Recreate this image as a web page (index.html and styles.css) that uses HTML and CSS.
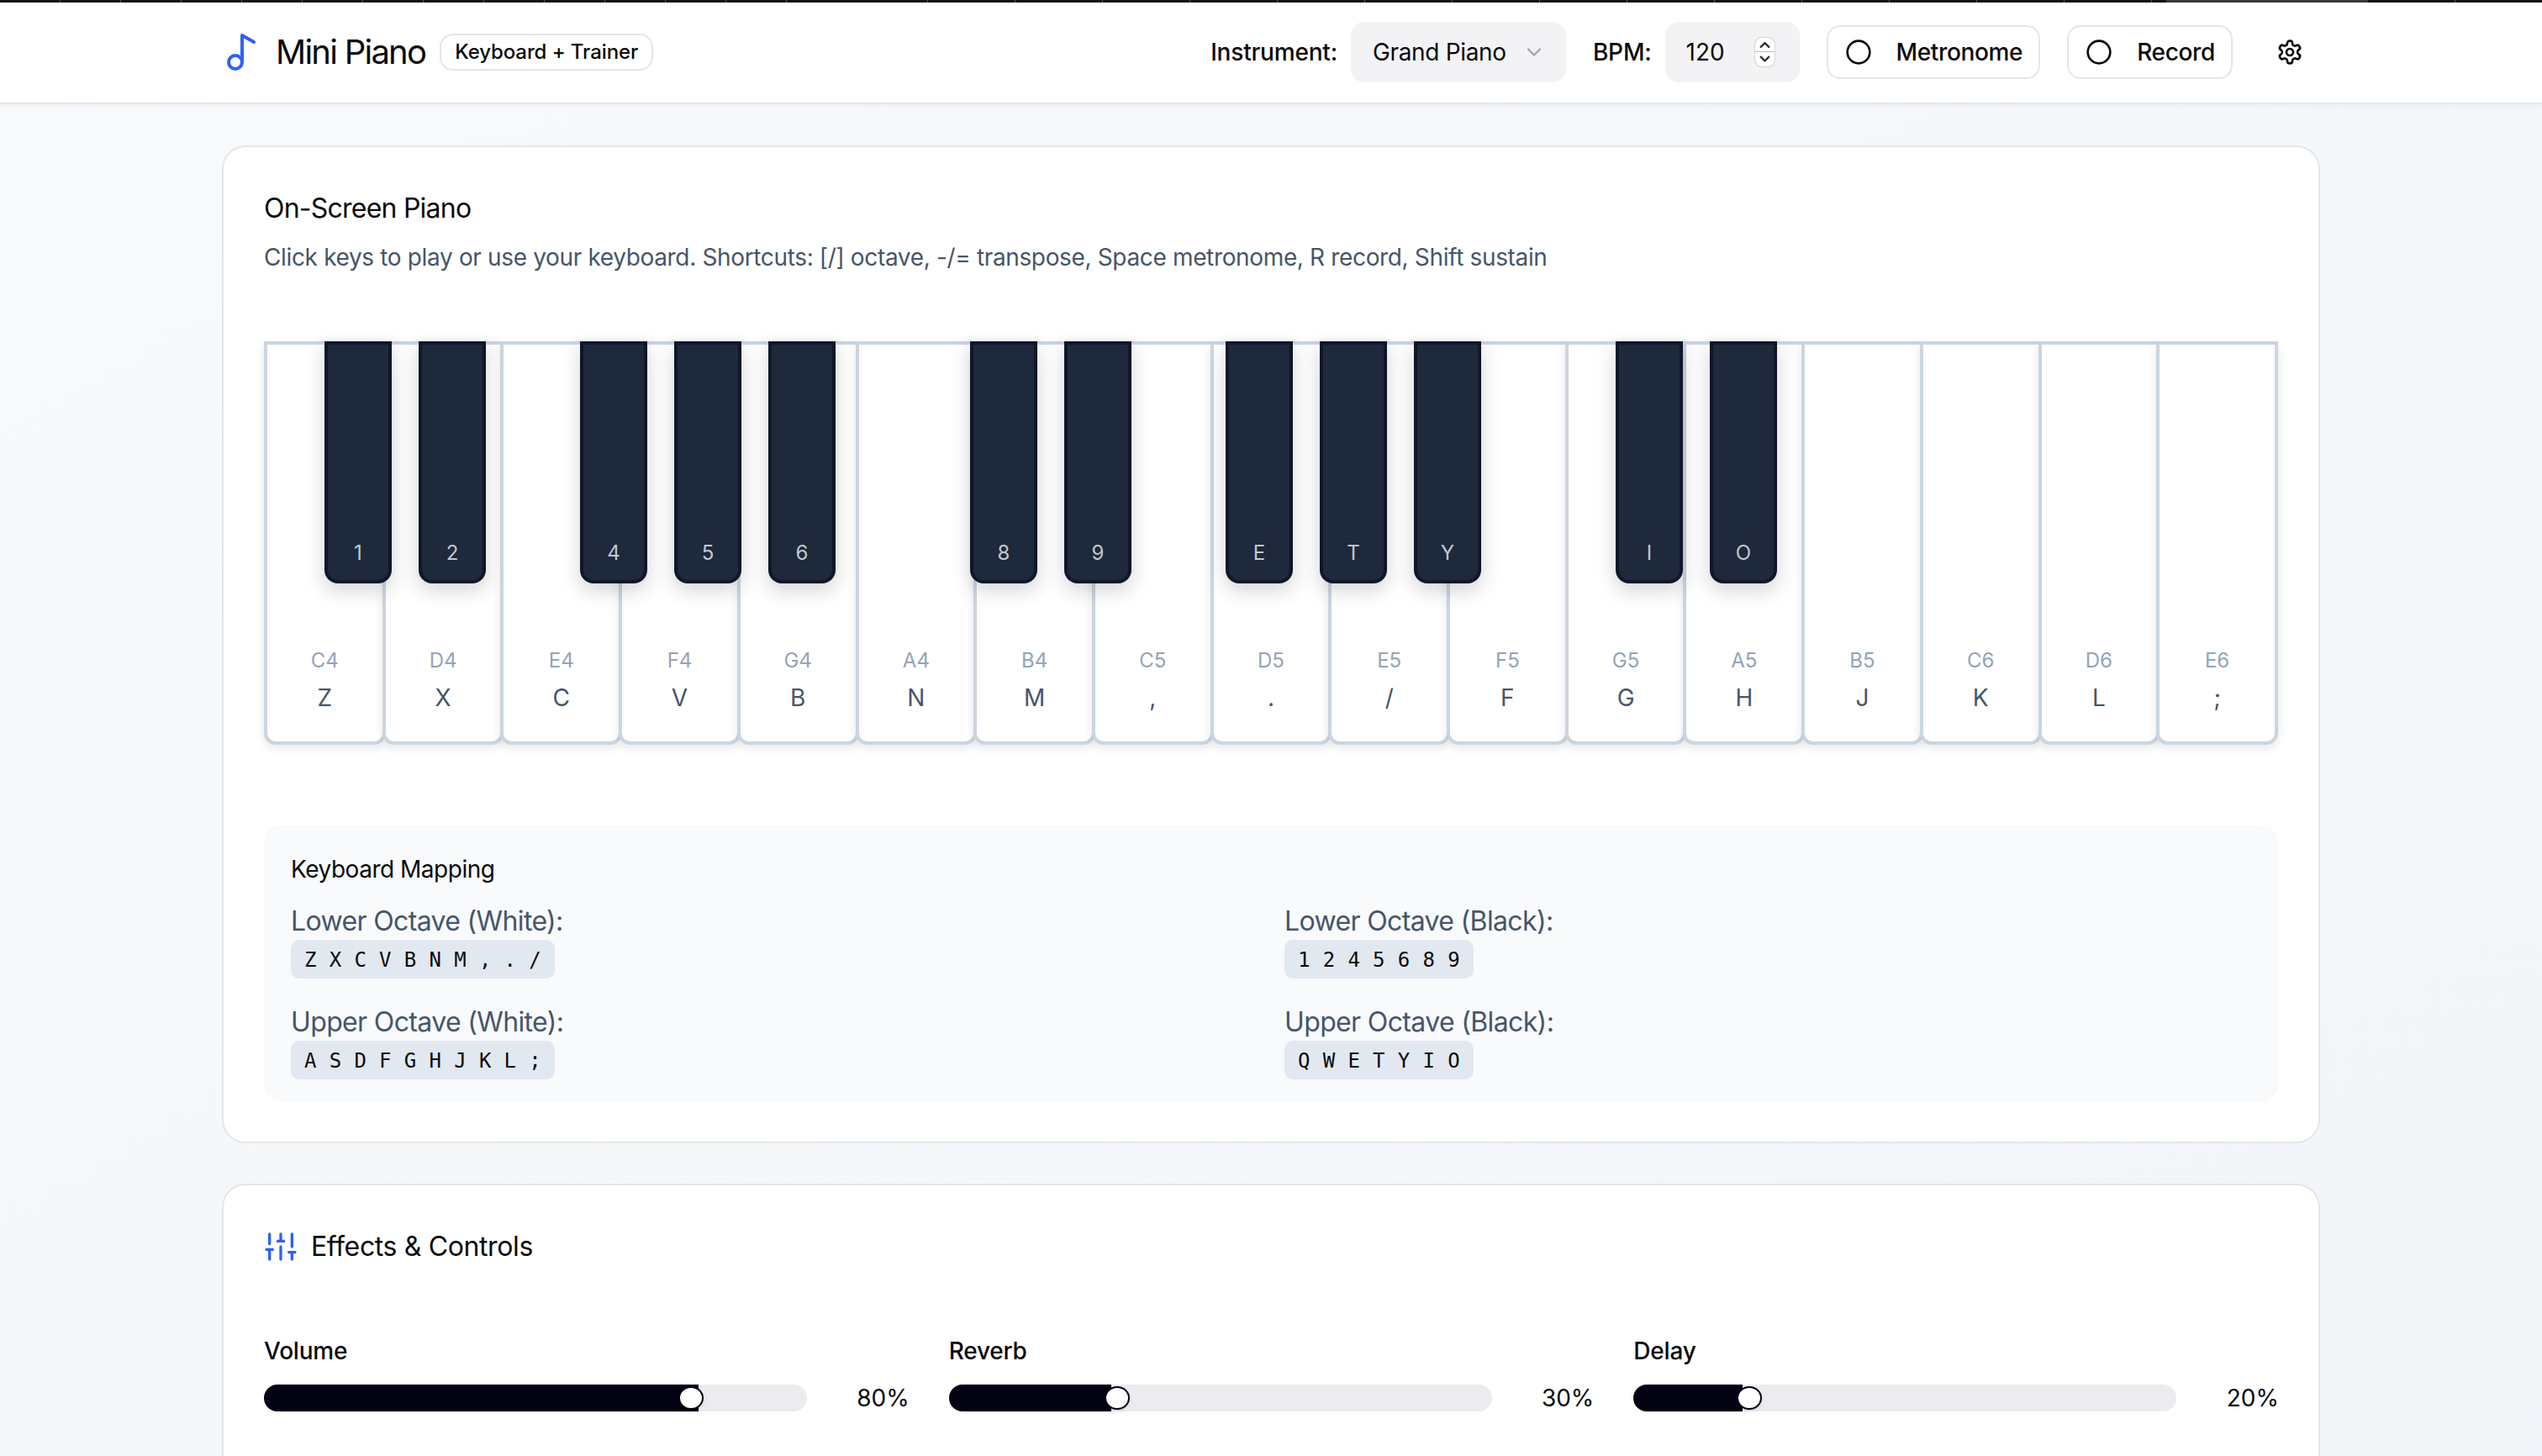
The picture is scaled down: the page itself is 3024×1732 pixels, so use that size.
FILE: index.html
```html
<!DOCTYPE html>
<html lang="en">
<head>
    <meta charset="UTF-8">
    <title>Mini Piano</title>
    <link rel="stylesheet" href="styles.css">
</head>
<body>
    <div class="tabstrip">
        <div class="tabs-left"></div>
        <div class="tabs-right"></div>
        <div class="tabs-active"></div>
        <div class="tabs-end"></div>
    </div>

    <header class="topbar">
        <div class="brand">
            <svg class="icon-note" viewBox="0 0 24 24"><circle cx="8" cy="18" r="4"/><path d="M12 18V2l7 4"/></svg>
            <h1>Mini Piano</h1>
            <span class="badge">Keyboard + Trainer</span>
        </div>
        <div class="controls">
            <div class="field">
                <label>Instrument:</label>
                <div class="select">
                    <span>Grand Piano</span>
                    <svg class="chevron" viewBox="0 0 24 24"><path d="m6 9 6 6 6-6"/></svg>
                </div>
            </div>
            <div class="field">
                <label>BPM:</label>
                <div class="number">
                    <span>120</span>
                    <div class="spinner">
                        <svg viewBox="0 0 24 12"><path d="m7 9 5-5 5 5"/></svg>
                        <svg viewBox="0 0 24 12"><path d="m7 3 5 5 5-5"/></svg>
                    </div>
                </div>
            </div>
            <button class="btn"><svg class="icon-btn" viewBox="0 0 24 24"><circle cx="12" cy="12" r="10"/></svg>Metronome</button>
            <button class="btn"><svg class="icon-btn" viewBox="0 0 24 24"><circle cx="12" cy="12" r="10"/></svg>Record</button>
            <button class="btn-ghost">
                <svg class="icon-btn" viewBox="0 0 24 24"><path d="M12.22 2h-.44a2 2 0 0 0-2 2v.18a2 2 0 0 1-1 1.73l-.43.25a2 2 0 0 1-2 0l-.15-.08a2 2 0 0 0-2.73.73l-.22.38a2 2 0 0 0 .73 2.73l.15.1a2 2 0 0 1 1 1.72v.51a2 2 0 0 1-1 1.74l-.15.09a2 2 0 0 0-.73 2.73l.22.38a2 2 0 0 0 2.73.73l.15-.08a2 2 0 0 1 2 0l.43.25a2 2 0 0 1 1 1.73V20a2 2 0 0 0 2 2h.44a2 2 0 0 0 2-2v-.18a2 2 0 0 1 1-1.73l.43-.25a2 2 0 0 1 2 0l.15.08a2 2 0 0 0 2.73-.73l.22-.39a2 2 0 0 0-.73-2.73l-.15-.08a2 2 0 0 1-1-1.74v-.5a2 2 0 0 1 1-1.74l.15-.09a2 2 0 0 0 .73-2.73l-.22-.38a2 2 0 0 0-2.73-.73l-.15.08a2 2 0 0 1-2 0l-.43-.25a2 2 0 0 1-1-1.73V4a2 2 0 0 0-2-2z"/><circle cx="12" cy="12" r="3"/></svg>
            </button>
        </div>
    </header>

    <main class="page">
        <section class="card">
            <h2 class="piano-title">On-Screen Piano</h2>
            <p class="hint">Click keys to play or use your keyboard. Shortcuts: [/] octave, -/= transpose, Space metronome, R record, Shift sustain</p>

            <div class="keyboard">
                <div class="white-key"><span class="note">C4</span><span class="letter">Z</span></div>
                <div class="white-key"><span class="note">D4</span><span class="letter">X</span></div>
                <div class="white-key"><span class="note">E4</span><span class="letter">C</span></div>
                <div class="white-key"><span class="note">F4</span><span class="letter">V</span></div>
                <div class="white-key"><span class="note">G4</span><span class="letter">B</span></div>
                <div class="white-key"><span class="note">A4</span><span class="letter">N</span></div>
                <div class="white-key"><span class="note">B4</span><span class="letter">M</span></div>
                <div class="white-key"><span class="note">C5</span><span class="letter">,</span></div>
                <div class="white-key"><span class="note">D5</span><span class="letter">.</span></div>
                <div class="white-key"><span class="note">E5</span><span class="letter">/</span></div>
                <div class="white-key"><span class="note">F5</span><span class="letter">F</span></div>
                <div class="white-key"><span class="note">G5</span><span class="letter">G</span></div>
                <div class="white-key"><span class="note">A5</span><span class="letter">H</span></div>
                <div class="white-key"><span class="note">B5</span><span class="letter">J</span></div>
                <div class="white-key"><span class="note">C6</span><span class="letter">K</span></div>
                <div class="white-key"><span class="note">D6</span><span class="letter">L</span></div>
                <div class="white-key"><span class="note">E6</span><span class="letter">;</span></div>

                <div class="black-key" style="left: 72px">1</div>
                <div class="black-key" style="left: 184px">2</div>
                <div class="black-key" style="left: 376px">4</div>
                <div class="black-key" style="left: 488px">5</div>
                <div class="black-key" style="left: 600px">6</div>
                <div class="black-key" style="left: 840px">8</div>
                <div class="black-key" style="left: 952px">9</div>
                <div class="black-key" style="left: 1144px">E</div>
                <div class="black-key" style="left: 1256px">T</div>
                <div class="black-key" style="left: 1368px">Y</div>
                <div class="black-key" style="left: 1608px">I</div>
                <div class="black-key" style="left: 1720px">O</div>
            </div>

            <div class="mapping">
                <h3>Keyboard Mapping</h3>
                <div class="mapping-grid">
                    <div>
                        <div class="map-label">Lower Octave (White):</div>
                        <code>Z X C V B N M , . /</code>
                    </div>
                    <div>
                        <div class="map-label">Lower Octave (Black):</div>
                        <code>1 2 4 5 6 8 9</code>
                    </div>
                    <div>
                        <div class="map-label">Upper Octave (White):</div>
                        <code>A S D F G H J K L ;</code>
                    </div>
                    <div>
                        <div class="map-label">Upper Octave (Black):</div>
                        <code>Q W E T Y I O</code>
                    </div>
                </div>
            </div>
        </section>

        <section class="card card-effects">
            <div class="card-title">
                <svg class="icon-sliders" viewBox="0 0 24 24">
                    <path d="M4 21v-7M4 10V3M12 21v-9M12 8V3M20 21v-5M20 12V3"/>
                    <path class="bars" d="M1 14h6M9 8h6M17 16h6"/>
                </svg>
                <h2>Effects &amp; Controls</h2>
            </div>
            <div class="sliders">
                <div class="slider-group">
                    <div class="slider-label">Volume</div>
                    <div class="slider-row">
                        <div class="track">
                            <div class="fill" style="width: 80%"></div>
                            <div class="thumb" style="left: 493px"></div>
                        </div>
                        <span class="value">80%</span>
                    </div>
                </div>
                <div class="slider-group">
                    <div class="slider-label">Reverb</div>
                    <div class="slider-row">
                        <div class="track">
                            <div class="fill" style="width: 30%"></div>
                            <div class="thumb" style="left: 185px"></div>
                        </div>
                        <span class="value">30%</span>
                    </div>
                </div>
                <div class="slider-group">
                    <div class="slider-label">Delay</div>
                    <div class="slider-row">
                        <div class="track">
                            <div class="fill" style="width: 20%"></div>
                            <div class="thumb" style="left: 123px"></div>
                        </div>
                        <span class="value">20%</span>
                    </div>
                </div>
            </div>
        </section>
    </main>
</body>
</html>
```

FILE: styles.css
```css
* {
    box-sizing: border-box;
}
html, body {
    height: 100vh;
    overflow: hidden;
}
body {
    margin: 0;
    font-family: Inter, "Liberation Sans", sans-serif;
    color: #0a0a0a;
    background: linear-gradient(to bottom right, #f8fafc, #f1f5f9);
}
h1, h2, h3, p {
    margin: 0;
    font-weight: 400;
}
svg {
    fill: none;
    stroke: currentColor;
    stroke-width: 2;
    stroke-linecap: round;
    stroke-linejoin: round;
    flex-shrink: 0;
}

/* strip along the top edge */
.tabstrip {
    display: flex;
    height: 3px;
    background: #111;
}
.tabs-left {
    width: 1000px;
    background: repeating-linear-gradient(to right, #111 0, #111 71px, #555 71px, #555 72px);
}
.tabs-right {
    width: 1577px;
    background: repeating-linear-gradient(to right, #111 0, #111 103px, #555 103px, #555 104px);
}
.tabs-active {
    width: 240px;
    background: #3a3a3a;
}
.tabs-end {
    flex: 1;
    background: repeating-linear-gradient(to right, #111 0, #111 103px, #555 103px, #555 104px);
}

/* top bar */
.topbar {
    display: flex;
    justify-content: space-between;
    align-items: center;
    height: 121px;
    padding: 0 264px 2px;
    background: #fff;
    border-bottom: 2px solid #e2e4ee;
    box-shadow: 0 2px 6px rgba(0, 0, 0, 0.05);
    position: relative;
}
.brand {
    display: flex;
    align-items: center;
}
.icon-note {
    width: 48px;
    height: 48px;
    color: #2f62f0;
    margin-right: 16px;
}
.brand h1 {
    font-size: 40px;
    line-height: 56px;
    letter-spacing: -1.75px;
    margin-right: 17px;
}
.badge {
    display: inline-flex;
    align-items: center;
    height: 44px;
    padding: 0 16px;
    font-size: 24px;
    font-weight: 500;
    letter-spacing: -0.1px;
    border: 2px solid #e5e5e5;
    border-radius: 16px;
}
.controls {
    display: flex;
    align-items: center;
    gap: 32px;
    font-size: 28px;
}
.field {
    display: flex;
    align-items: center;
    gap: 16px;
}
.field label {
    font-weight: 500;
    letter-spacing: -0.2px;
}
.select, .number {
    display: flex;
    align-items: center;
    height: 72px;
    background: #f3f3f5;
    border-radius: 16px;
}
.select {
    width: 256px;
    padding: 0 24px 0 26px;
    justify-content: space-between;
    letter-spacing: -0.33px;
}
.chevron {
    width: 28px;
    height: 28px;
    color: #a3a3a8;
}
.number {
    width: 160px;
    padding: 0 30px 0 25px;
    justify-content: space-between;
}
.spinner {
    display: flex;
    flex-direction: column;
    width: 23px;
    height: 34px;
    background: #fff;
    border-radius: 8px;
    box-shadow: 0 0 2px rgba(0, 0, 0, 0.4);
}
.spinner svg {
    width: 23px;
    height: 17px;
    stroke-width: 2.4;
    color: #333;
}
.spinner svg:first-child {
    border-bottom: 1px solid #bbb;
}
.btn {
    display: flex;
    align-items: center;
    height: 64px;
    padding: 0 19px 0 20px;
    gap: 29px;
    font: 500 28px Inter, "Liberation Sans", sans-serif;
    letter-spacing: -0.35px;
    color: #0a0a0a;
    background: #fff;
    border: 2px solid #e5e5e5;
    border-radius: 16px;
}
.btn-ghost {
    display: flex;
    justify-content: center;
    align-items: center;
    width: 72px;
    height: 64px;
    padding: 0;
    color: #0a0a0a;
    background: none;
    border: none;
}
.icon-btn {
    width: 32px;
    height: 32px;
}

/* cards */
.page {
    display: flex;
    flex-direction: column;
    gap: 48px;
    padding: 49px 264px 0;
}
.card {
    padding: 49px 48px 48px;
    background: #fff;
    border: 2px solid #e5e5e5;
    border-radius: 28px;
}
.card-effects {
    min-height: 500px;
}
.card h2 {
    font-size: 32px;
    line-height: 48px;
    letter-spacing: -0.37px;
}
.card .piano-title {
    letter-spacing: -0.77px;
}
.hint {
    margin-top: 14px;
    font-size: 28px;
    line-height: 40px;
    letter-spacing: -0.35px;
    color: #475569;
}

/* piano */
.keyboard {
    position: relative;
    display: flex;
    height: 480px;
    margin-top: 80px;
}
.white-key {
    flex: 1;
    display: flex;
    flex-direction: column;
    align-items: center;
    justify-content: flex-end;
    padding-bottom: 32px;
    margin-left: -4px;
    background: #fff;
    border: 4px solid #cbd5e1;
    border-radius: 0 0 14px 14px;
    box-shadow: 0 4px 12px rgba(15, 23, 42, 0.1);
}
.white-key:first-child {
    margin-left: 0;
}
.note {
    font-size: 24px;
    line-height: 32px;
    color: #94a3b8;
}
.letter {
    margin-top: 8px;
    font-size: 28px;
    line-height: 40px;
    color: #475569;
}
.black-key {
    position: absolute;
    top: 0;
    width: 80px;
    height: 288px;
    padding-bottom: 16px;
    display: flex;
    justify-content: center;
    align-items: flex-end;
    font-size: 24px;
    line-height: 32px;
    color: #c3c7ce;
    background: #1e293b;
    border: 4px solid #0f172a;
    border-radius: 0 0 16px 16px;
    box-shadow: 0 8px 24px rgba(0, 0, 0, 0.18);
}

/* mapping table */
.mapping {
    margin-top: 96px;
    padding: 32px 32px 26px;
    background: #f8fafc;
    border-radius: 20px;
}
.mapping h3 {
    font-size: 28px;
    line-height: 40px;
    letter-spacing: -0.48px;
}
.mapping-grid {
    display: grid;
    grid-template-columns: 1fr 1fr;
    column-gap: 32px;
    row-gap: 28px;
    margin-top: 18px;
}
.map-label {
    margin-bottom: -2px;
    font-size: 32px;
    line-height: 48px;
    letter-spacing: -0.64px;
    color: #475569;
}
code {
    display: inline-block;
    height: 46px;
    padding: 0 16px;
    font-family: "DejaVu Sans Mono", "Liberation Mono", monospace;
    font-size: 24px;
    line-height: 48px;
    letter-spacing: 0.4px;
    vertical-align: top;
    background: #e2e8f0;
    border-radius: 10px;
}

/* sliders */
.card-title {
    display: flex;
    align-items: center;
    gap: 16px;
}
.icon-sliders {
    width: 40px;
    height: 40px;
    color: #2f62f0;
}
.icon-sliders .bars {
    stroke-linecap: butt;
}
.sliders {
    display: grid;
    grid-template-columns: repeat(3, 1fr);
    gap: 48px;
    margin-top: 80px;
}
.slider-label {
    font-size: 28px;
    font-weight: 500;
    line-height: 40px;
    letter-spacing: -0.2px;
}
.slider-row {
    display: flex;
    align-items: center;
    justify-content: space-between;
    margin-top: 19px;
}
.track {
    position: relative;
    width: 646px;
    height: 32px;
    background: #ececf0;
    border-radius: 16px;
}
.fill {
    height: 100%;
    background: #030213;
    border-radius: 16px 0 0 16px;
}
.thumb {
    position: absolute;
    top: 2px;
    width: 30px;
    height: 28px;
    background: #fff;
    border: 2px solid #030213;
    border-radius: 50%;
    box-shadow: 0 2px 4px rgba(0, 0, 0, 0.1);
}
.value {
    margin-right: -1px;
    font-size: 28px;
}
```
